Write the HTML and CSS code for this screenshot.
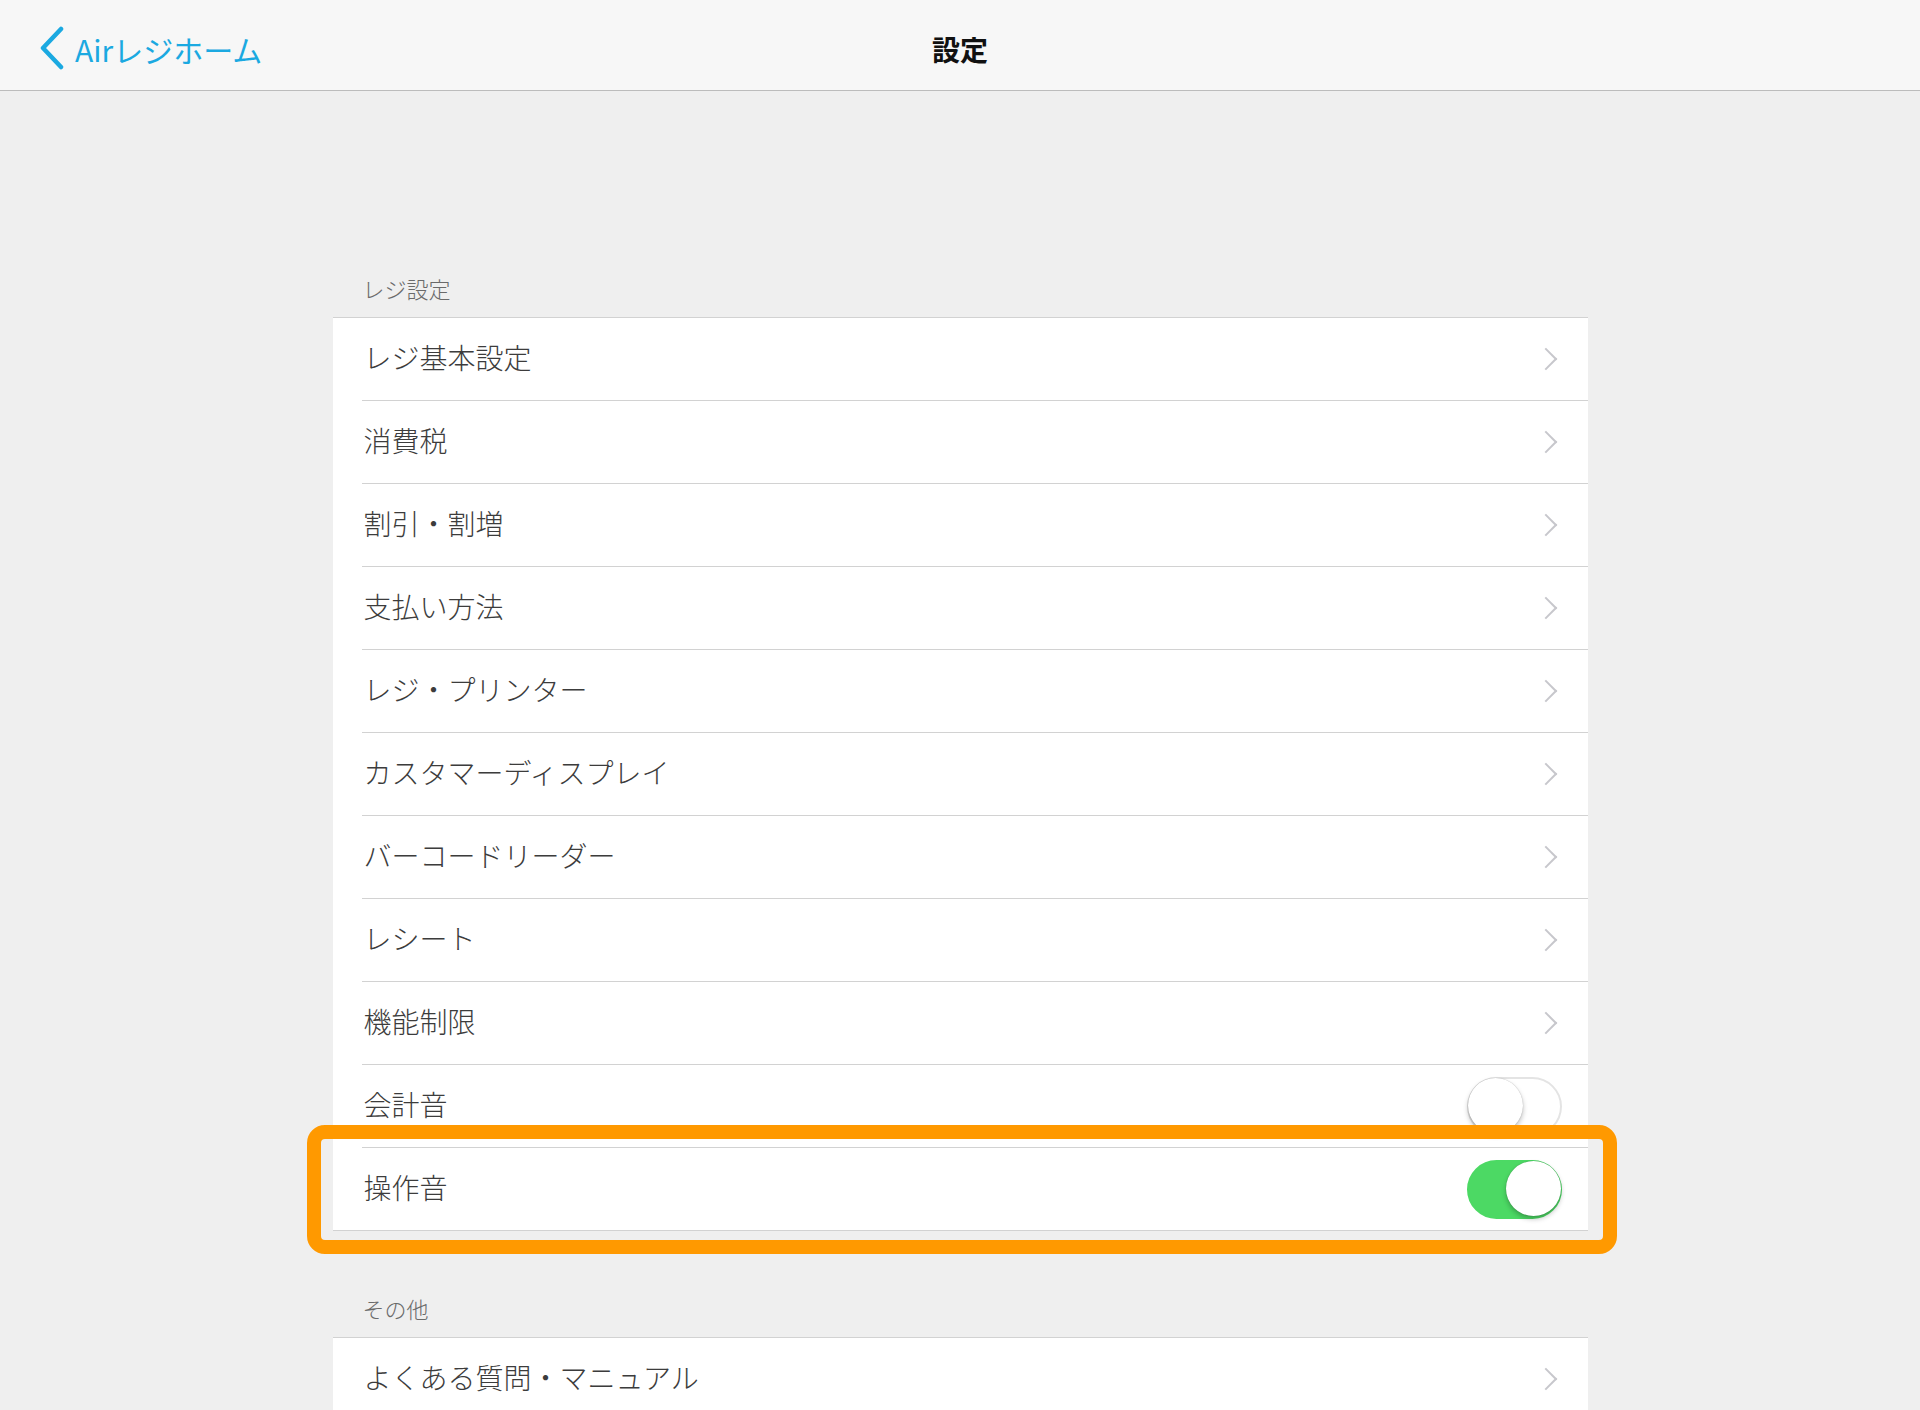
FILE: index.html
```html
<!DOCTYPE html>
<html lang="ja">
<head>
  <meta charset="UTF-8">
  <meta name="viewport" content="width=device-width, initial-scale=1.0">
  <title>設定</title>
  <link rel="stylesheet" href="styles.css">
</head>
<body>
  <div class="navbar">
    <a class="back">
      <svg class="back-icon" width="24" height="44" viewBox="0 0 24 44"><polyline points="21,3 3,22 21,41" fill="none" stroke="#1ba9e1" stroke-width="4.5" stroke-linecap="round" stroke-linejoin="round"/></svg>
      <span>Airレジホーム</span>
    </a>
    <div class="title">設定</div>
    <div></div>
  </div>

  <div class="content">
    <div class="section">
      <div class="section-label">レジ設定</div>
      <ul class="panel">
        <li class="row"><span>レジ基本設定</span><i class="chev"></i></li>
        <li class="row"><span>消費税</span><i class="chev"></i></li>
        <li class="row"><span>割引・割増</span><i class="chev"></i></li>
        <li class="row"><span>支払い方法</span><i class="chev"></i></li>
        <li class="row"><span>レジ・プリンター</span><i class="chev"></i></li>
        <li class="row"><span>カスタマーディスプレイ</span><i class="chev"></i></li>
        <li class="row"><span>バーコードリーダー</span><i class="chev"></i></li>
        <li class="row"><span>レシート</span><i class="chev"></i></li>
        <li class="row"><span>機能制限</span><i class="chev"></i></li>
        <li class="row"><span>会計音</span><div class="toggle"><div class="knob"></div></div></li>
        <li class="row"><span>操作音</span><div class="toggle on"><div class="knob"></div></div>
          <div class="highlight"></div>
        </li>
      </ul>
    </div>

    <div class="section">
      <div class="section-label">その他</div>
      <ul class="panel">
        <li class="row"><span>よくある質問・マニュアル</span><i class="chev"></i></li>
      </ul>
    </div>
  </div>
</body>
</html>
```

FILE: styles.css
```css
html {
  overflow: hidden;
}
body {
  margin: 0;
  background-color: #efefef;
  font-family: "Noto Sans CJK JP", "Noto Sans", sans-serif;
  height: 1410px;
  overflow: hidden;
}
.navbar {
  display: grid;
  grid-template-columns: 1fr auto 1fr;
  align-items: center;
  height: 82px;
  padding-top: 8px;
  background-color: #f7f7f7;
  border-bottom: 1px solid #bcbcbc;
}
.back {
  display: flex;
  align-items: center;
  gap: 11px;
  padding-left: 40px;
  color: #1ba9e1;
  font-size: 30px;
  cursor: pointer;
}
.back-icon {
  display: block;
  margin-top: -2px;
}
.title {
  font-size: 28px;
  font-weight: bold;
  color: #111;
}
.content {
  padding-top: 183px;
}
.section {
  width: 1255px;
  margin: 0 auto 63px;
}
.section-label {
  font-size: 22px;
  line-height: 28px;
  font-weight: 300;
  color: #6a6a6a;
  padding-left: 30px;
  margin-bottom: 15px;
}
.panel {
  list-style: none;
  margin: 0;
  padding: 0;
  background-color: #fff;
  border-top: 1px solid #d2d2d2;
  border-bottom: 1px solid #d2d2d2;
}
.row {
  position: relative;
  display: flex;
  align-items: center;
  justify-content: space-between;
  height: 82px;
  margin-left: 29px;
  padding: 0 26px 0 2px;
  border-bottom: 1px solid #d2d2d2;
  font-size: 28px;
  font-weight: 300;
  color: #3c3c3c;
}
.row span {
  margin-top: -5px;
}
.row:last-child {
  border-bottom: none;
}
.chev {
  display: block;
  width: 14px;
  height: 14px;
  margin-right: 8px;
  border-top: 2px solid #c7c7cc;
  border-right: 2px solid #c7c7cc;
  transform: rotate(45deg);
}
.toggle {
  position: relative;
  width: 91px;
  height: 55px;
  border: 2px solid #e4e4e4;
  border-radius: 30px;
  background-color: #fff;
}
.toggle .knob {
  position: absolute;
  top: -1px;
  left: -1px;
  width: 55px;
  height: 55px;
  border-radius: 50%;
  background-color: #fff;
  box-shadow: 0 3px 5px rgba(0, 0, 0, 0.25), 0 0 1px rgba(0, 0, 0, 0.3);
}
.toggle.on {
  border-color: #4cd964;
  background-color: #4cd964;
}
.toggle.on .knob {
  left: auto;
  right: -1px;
}
.highlight {
  position: absolute;
  top: -23px;
  bottom: -24px;
  left: -55px;
  right: -29px;
  border: 14px solid #ff9900;
  border-radius: 18px;
  pointer-events: none;
}
```
